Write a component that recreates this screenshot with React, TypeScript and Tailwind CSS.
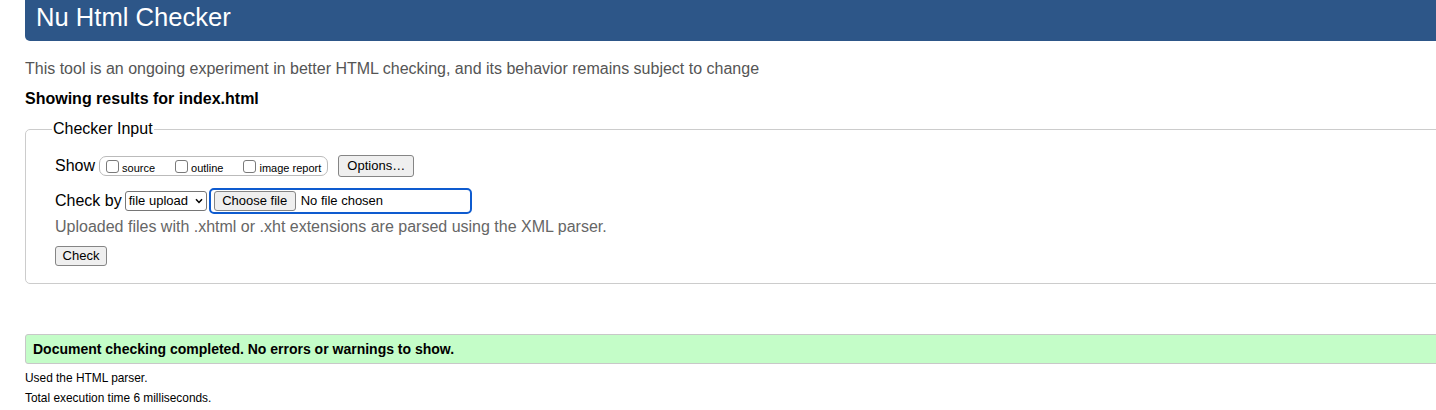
import React from "react";

export default function App() {
  const options = [
    { id: "source", label: "source" },
    { id: "outline", label: "outline" },
    { id: "image", label: "image report" },
  ];

  return (
    <div className="w-full h-[410px] overflow-hidden bg-white text-black font-['Liberation_Sans',Arial,sans-serif]">
      <div className="pl-[25px]">
        {/* Header */}
        <h1 className="w-[1440px] h-[41px] bg-[#2d5688] rounded-bl-[5px] pl-[11px] text-white text-[25.6px] leading-[34px] font-normal">
          Nu Html Checker
        </h1>

        <p className="mt-[18px] text-[16px] leading-[20px] text-[#555]">
          This tool is an ongoing experiment in better HTML checking, and its behavior remains subject to change
        </p>
        <p className="mt-[10px] text-[16px] leading-[20px] font-bold">Showing results for index.html</p>

        {/* Checker Input */}
        <fieldset className="mt-[10px] w-[1440px] border border-[#ccc] rounded-[5px] pl-[29px] pt-[16px] pb-[17px]">
          <legend className="-ml-[3px] px-[1px] text-[16px] leading-[20px]">Checker Input</legend>

          <div className="flex items-center h-[22px]">
            <span className="text-[16px] leading-[20px]">Show</span>
            <div className="ml-[4px] h-[20px] flex items-center border border-[#bbb] rounded-[7px] pl-[6px] pr-[6px]">
              {options.map((o, i) => (
                <label key={o.id} className={`flex items-center ${i < options.length - 1 ? "mr-[20px]" : ""}`}>
                  <input
                    type="checkbox"
                    className="appearance-none w-[13px] h-[13px] border border-[#7a7a7a] rounded-[3px] bg-white"
                  />
                  <span className="ml-[3px] text-[11px] leading-[14px] mt-[3px]">{o.label}</span>
                </label>
              ))}
            </div>
            <button className="ml-[10px] w-[76px] h-[22px] bg-[#efefef] border border-[#858585] rounded-[3px] text-[13px] leading-[16px] text-black">
              Options…
            </button>
          </div>

          <div className="mt-[11px] flex items-center h-[26px]">
            <span className="text-[16px] leading-[20px]">Check by</span>
            <div className="ml-[3px] relative w-[82px] h-[20px] border border-[#767676] rounded-[3px] bg-white flex items-center pl-[3px]">
              <span className="text-[13px] leading-[16px]">file upload</span>
              <svg className="absolute right-[3px] top-[6px]" width="8" height="6" viewBox="0 0 8 6">
                <path d="M1 1.2 L4 4.4 L7 1.2" fill="none" stroke="#000" strokeWidth="1.5" />
              </svg>
            </div>
            <div className="ml-[2px] w-[263px] h-[26px] border-2 border-[#0e5bcf] rounded-[5px] flex items-center pl-[3px]">
              <button className="w-[82px] h-[20px] bg-[#efefef] border border-[#858585] rounded-[3px] text-[13px] leading-[16px] text-black">
                Choose file
              </button>
              <span className="ml-[5px] text-[13px] leading-[16px]">No file chosen</span>
            </div>
          </div>

          <p className="mt-[3px] text-[16px] leading-[20px] text-[#666]">
            Uploaded files with .xhtml or .xht extensions are parsed using the XML parser.
          </p>

          <button className="mt-[9px] block w-[52px] h-[20px] bg-[#efefef] border border-[#858585] rounded-[3px] text-[13px] leading-[16px] text-black">
            Check
          </button>
        </fieldset>

        {/* Result */}
        <div className="mt-[50px] w-[1440px] h-[30px] bg-[#c4fdc8] border border-[#c8c8c8] rounded-l-[3px] pl-[7px] flex items-center">
          <p className="text-[14px] leading-[18px] font-bold">Document checking completed. No errors or warnings to show.</p>
        </div>

        <p className="mt-[7px] text-[11.9px] leading-[14px]">Used the HTML parser.</p>
        <p className="mt-[6px] text-[11.9px] leading-[14px]">Total execution time 6 milliseconds.</p>
      </div>
    </div>
  );
}
